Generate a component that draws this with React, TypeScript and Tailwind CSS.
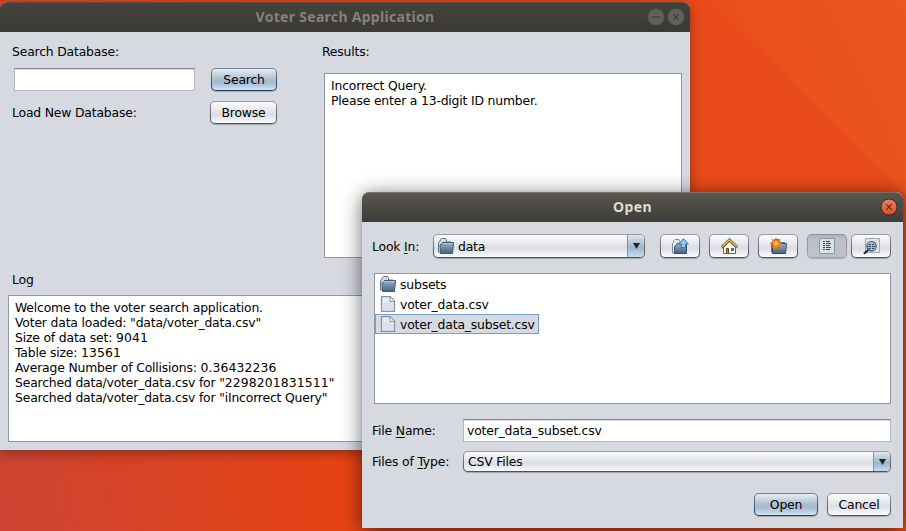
import type { ReactNode } from "react";

function Bevel({ tone = "light", className = "", children }: { tone?: "light" | "blue" | "pressed"; className?: string; children?: ReactNode }) {
  const ring =
    tone === "blue"
      ? "bg-linear-to-b from-[#6f8aa6] to-[#24394f]"
      : tone === "pressed"
        ? "bg-linear-to-b from-[#8d9098] to-[#a3a6ae]"
        : "bg-linear-to-b from-[#999ca1] to-[#4c4f54]";
  const fill =
    tone === "blue"
      ? "bg-[linear-gradient(#e9eef3,#c3d0dc_30%,#a3b8cb_58%,#b5cade_80%,#cfe4f6)]"
      : tone === "pressed"
        ? "bg-[linear-gradient(#b0b3bc,#bdc0c9_25%,#bfc2cb)]"
        : "bg-[linear-gradient(#fbfbfc,#e9ebef_35%,#dadde4_58%,#e8ebf1_78%,#fbfcff)]";
  return (
    <div className={`flex shrink-0 rounded-[5px] p-px shadow-[0_1px_1px_#a5a8af] ${ring} ${className}`}>
      <div className={`flex flex-1 items-center justify-center rounded-[4px] ${fill}`}>{children}</div>
    </div>
  );
}

function ArrowCap() {
  return (
    <div className="flex w-[17px] items-center justify-center self-stretch rounded-r-[4px] border-l border-[#7894ae] bg-[linear-gradient(#dfe7ee,#b5c7d7_35%,#9fb5c9_58%,#c4dcf0)]">
      <svg width="7" height="6" viewBox="0 0 7 6"><path d="M0 0h7L3.5 6z" fill="#22242a" /></svg>
    </div>
  );
}

function Gradients() {
  return (
    <svg width="0" height="0" className="absolute">
      <defs>
        <linearGradient id="folder" x1="0" y1="0" x2="0" y2="1"><stop stopColor="#9bb1c5" /><stop offset="1" stopColor="#45627f" /></linearGradient>
        <linearGradient id="hot" x1="0" y1="0" x2="0" y2="1"><stop stopColor="#f47b5a" /><stop offset="1" stopColor="#e44e22" /></linearGradient>
      </defs>
    </svg>
  );
}

function Folder() {
  return (
    <svg width="16" height="16" viewBox="0 0 16 16" className="shrink-0">
      <path d="M.5 14V5l1.500-2 .5-1.500 1-1h4l1 1V4h4.500l1 1.500V14z" fill="#d3dbe4" stroke="#5f7286" />
      <path d="M2.500 15l-.5-8 1.500-.5L4.500 4.500h11l-1 11h-12z" fill="url(#folder)" stroke="#3f5974" />
      <path d="M4.500 5.500h10" stroke="#b9cad9" />
    </svg>
  );
}

function FileIcon() {
  return (
    <svg width="16" height="16" viewBox="0 0 16 16" className="shrink-0">
      <path d="M1.500.7h8.700l4.300 4.400v10.200h-13z" fill="#e5ecf5" stroke="#8d9299" strokeWidth="1.300" />
      <path d="M3 14V7l7-1 3 1v7z" fill="#d6e2ef" />
      <path d="M10 1v4.500h4.300" fill="#fbfcfd" stroke="#8d9299" />
    </svg>
  );
}

function UpIcon() {
  return (
    <svg width="17" height="17" viewBox="0 0 17 17">
      <path d="M.5 15V5.500l1-1 .5-2 1-1h4l1 2V15z" fill="#e4e9f0" stroke="#7c8b9b" />
      <path d="M2.500 15V8.500l1.500-1 1-2h9.500v10h-12z" fill="url(#folder)" stroke="#3b536b" />
      <path d="M11.500.7L16.300 6h-2.800v3.600h-4V6H6.700z" fill="#8dcaf5" stroke="#2779b5" />
    </svg>
  );
}

function HomeIcon() {
  return (
    <svg width="17" height="17" viewBox="0 0 17 17">
      <path d="M2.500 8L8.500 2.500l6 5.500v7.500h-12z" fill="#f8f7f1" stroke="#656463" />
      <path d="M.8 9.300L8.500 2l7.700 7.300" fill="none" stroke="#65511a" strokeWidth="3" />
      <path d="M1 8.700l7.500-7L16 8.700" fill="none" stroke="#e1be58" strokeWidth="1.500" />
      <path d="M5.500 15.500v-5h2v5" fill="#b18c52" stroke="#554323" />
      <path d="M10.500 10.500h2v2h-2z" fill="#568db8" stroke="#37617f" />
    </svg>
  );
}

function NewFolderIcon() {
  return (
    <svg width="17" height="17" viewBox="0 0 17 17">
      <path d="M1.500 14V4.500h2l1-3h4l2 3h4V14z" fill="#8fa3b7" stroke="#5b7084" />
      <path d="M2.500 6.500h3l1-1h10l-1 10h-13z" fill="url(#folder)" stroke="#344d65" />
      <path d="M6 0l1.100 3L10 1.300 8.800 4.400l3.400 1.200-3.400 1.300 1.400 3.100L7.200 8.600 6 11.800 4.800 8.600 2 10l1.200-3.100L0 5.600l3.200-1.200L2 1.300 4.900 3z" fill="#ff8d20" stroke="#ee5e22" strokeWidth=".7" />
      <circle cx="6" cy="5.600" r="2" fill="#ffc02a" />
    </svg>
  );
}

function ListIcon() {
  return (
    <svg width="16" height="16" viewBox="0 0 16 16">
      <path d="M.5.5h15v15H.5z" fill="#d8e2ed" stroke="#8796a6" />
      <path d="M4 3.500h2M4 5.500h2M4 7.500h2M4 9.500h2M4 11.500h2M7 3.500h4M7 5.500h5M7 7.500h4M7 9.500h5M7 11.500h4" stroke="#40454b" />
    </svg>
  );
}

function DetailIcon() {
  return (
    <svg width="17" height="17" viewBox="0 0 17 17">
      <path d="M2.500.5h14v14h-14z" fill="#d9e3ed" stroke="#9eacba" />
      <path d="M5.400 11.800L1 15.700" stroke="#252c34" strokeWidth="2.200" />
      <circle cx="8.500" cy="8.200" r="4.700" fill="#a6c3dc" stroke="#4b5661" strokeWidth="1.200" />
      <path d="M5.500 6.500H8M9 6.500h2M5 8.500h3M9 8.500h3M5.500 10.500H8M9 10.500h2" stroke="#34465a" />
    </svg>
  );
}

function WinButton({ kind, active = false }: { kind: "min" | "close"; active?: boolean }) {
  return (
    <svg width="18" height="18" viewBox="0 0 18 18" className="shrink-0">
      <circle cx="9" cy="9" r="8" fill={active ? "url(#hot)" : "#62605a"} stroke={active ? "#35302a" : "#5c5a55"} strokeWidth={active ? 1 : 0.5} />
      <path d={kind === "min" ? "M5 9h8" : "M6.200 6.200l5.600 5.600M11.800 6.200l-5.600 5.600"} stroke="#3a3934" strokeWidth="1.200" />
    </svg>
  );
}

function Wallpaper() {
  return (
    <svg width="906" height="531" viewBox="0 0 906 531" className="absolute inset-0">
      <defs>
        <linearGradient id="wall" gradientUnits="userSpaceOnUse" x1="0" y1="520" x2="350" y2="450">
          <stop stopColor="#cc4432" /><stop offset=".5" stopColor="#d94323" /><stop offset="1" stopColor="#e74315" />
        </linearGradient>
        <linearGradient id="facet" gradientUnits="userSpaceOnUse" x1="740" y1="80" x2="906" y2="0">
          <stop stopColor="#ea4e1a" /><stop offset="1" stopColor="#ea5720" />
        </linearGradient>
      </defs>
      <path d="M0 0h906v531H0z" fill="url(#wall)" />
      <path d="M640 0h266v531H640z" fill="#e84a19" />
      <path d="M708 0l198 195V0z" fill="url(#facet)" />
      <path d="M160 531l82-81h120v81z" fill="#ee4710" fillOpacity=".1" />
    </svg>
  );
}

const log: [string, string, string][] = [
  ["Welcome to the voter search application.", "", ""],
  ['Voter data loaded: "data/voter_data.csv"', "", ""],
  ["Size of data set: ", "9041", ""],
  ["Table size: ", "13561", ""],
  ["Average Number of Collisions: ", "0.36432236", ""],
  ['Searched data/voter_data.csv for "', "2298201831511", '"'],
  ['Searched data/voter_data.csv for "iIncorrect Query"', "", ""],
];

export default function App() {
  return (
    <div className="relative h-[531px] w-[906px] overflow-hidden bg-[#e84314] font-['DejaVu_Sans',sans-serif] text-[12.4px] leading-[15px] tracking-[-0.18px] whitespace-nowrap text-black">
      <Wallpaper />
      <Gradients />
      <section className="absolute top-[2px] left-0 flex h-[448px] w-[690px] flex-col rounded-t-[7px] bg-[#d6d9e0] shadow-[0_3px_12px_rgba(0,0,0,0.35)]">
        <header className="flex h-[30px] items-center rounded-t-[7px] border-t border-[#504f4a] bg-linear-to-b from-[#43423d] to-[#3a3935] pr-[5px] pb-px pl-[43px]">
          <h1 className="flex-1 pb-px text-center font-['Noto_Sans',sans-serif] text-[14px] font-bold tracking-[0.3px] text-[#85827b]">Voter Search Application</h1>
          <div className="flex gap-[2px]"><WinButton kind="min" /><WinButton kind="close" /></div>
        </header>
        <div className="flex h-[226px]">
          <div className="flex w-[322px] flex-col pt-[12px] pl-[12px]">
            <span>Search Database:</span>
            <div className="mt-[9px] flex items-center pl-[2px]">
              <div className="h-[23px] w-[181px] border border-[#b4b6ba] border-t-[#85888e] bg-white shadow-[inset_0_1px_#d6d7da]" />
              <Bevel tone="blue" className="ml-[16px] h-[23px] w-[66px]">Search</Bevel>
            </div>
            <div className="mt-[10px] flex items-center">
              <span className="w-[198px]">Load New Database:</span>
              <Bevel className="h-[23px] w-[67px]">Browse</Bevel>
            </div>
          </div>
          <div className="pt-[12px]">
            <span className="block">Results:</span>
            <div className="mt-[14px] ml-[2px] h-[185px] w-[358px] border border-[#9297a1] bg-white px-[6px] pt-[4px]">
              <p>Incorrect Query.</p>
              <p>Please enter a 13-digit ID number.</p>
            </div>
          </div>
        </div>
        <div className="pt-[14px] pl-[8px]">
          <span className="block pl-[4px]">Log</span>
          <div className="mt-[8px] h-[147px] w-[674px] border border-[#9297a1] bg-white px-[6px] pt-[4px]">
            {log.map(([text, digits, tail]) => (
              <p key={text + digits}>{text}<span className="tracking-[0.11px]">{digits}</span>{tail}</p>
            ))}
          </div>
        </div>
      </section>

      <section className="absolute top-[192px] left-[362px] flex h-[336px] w-[541px] flex-col rounded-t-[7px] bg-[#d6d9e0] shadow-[0_3px_20px_rgba(0,0,0,0.6)]">
        <header className="flex h-[30px] items-center rounded-t-[7px] border-t border-[#76736a] bg-linear-to-b from-[#59574d] to-[#3d3c37] pr-[5px] pb-px pl-[23px]">
          <h2 className="flex-1 pb-px text-center font-['Noto_Sans',sans-serif] text-[14px] font-bold tracking-[0.4px] text-[#dfdbd2]">Open</h2>
          <WinButton kind="close" active />
        </header>
        <div className="flex flex-col pt-[12px] pr-[12px] pl-[10px]">
          <div className="flex h-[24px] items-center">
            <span className="w-[61px]">Look <u className="underline-offset-2">I</u>n:</span>
            <Bevel className="h-[24px] w-[212px]">
              <div className="flex flex-1 items-center gap-[4px] pl-[4px]"><Folder /><span>data</span></div>
              <ArrowCap />
            </Bevel>
            <div className="ml-[15px] flex gap-[9px]">
              <Bevel className="h-[24px] w-[40px]"><UpIcon /></Bevel>
              <Bevel className="h-[24px] w-[40px]"><HomeIcon /></Bevel>
              <Bevel className="h-[24px] w-[40px]"><NewFolderIcon /></Bevel>
              <div className="flex gap-[4px]">
                <Bevel tone="pressed" className="h-[24px] w-[40px]"><ListIcon /></Bevel>
                <Bevel className="h-[24px] w-[40px]"><DetailIcon /></Bevel>
              </div>
            </div>
          </div>
          <div className="mt-[15px] ml-[2px] flex h-[131px] w-[517px] flex-col items-start border border-[#9297a1] bg-white">
            <div className="flex h-[20px] items-center gap-[4px] pl-[5px]"><Folder />subsets</div>
            <div className="flex h-[20px] items-center gap-[4px] pl-[5px]"><FileIcon />voter_data.csv</div>
            <div className="flex h-[20px] w-[164px] items-center gap-[4px] border border-[#74a0cc] bg-[#d6d9e0] pl-[4px]"><FileIcon />voter_data_subset.csv</div>
          </div>
          <div className="mt-[15px] flex h-[23px] items-center">
            <span className="w-[91px]">File <u className="underline-offset-2">N</u>ame:</span>
            <div className="flex h-[23px] w-[428px] items-center border border-[#b4b6ba] border-t-[#85888e] bg-white pl-[3px] shadow-[inset_0_1px_#d6d7da]">voter_data_subset.csv</div>
          </div>
          <div className="mt-[9px] flex h-[21px] items-center">
            <span className="w-[91px]">Files of <u className="underline-offset-2">T</u>ype:</span>
            <Bevel className="h-[21px] w-[428px]">
              <span className="flex-1 pl-[4px]">CSV Files</span>
              <ArrowCap />
            </Bevel>
          </div>
          <div className="mt-[21px] flex justify-end gap-[9px]">
            <Bevel tone="blue" className="h-[23px] w-[64px]">Open</Bevel>
            <Bevel className="h-[23px] w-[64px]">Cancel</Bevel>
          </div>
        </div>
      </section>
    </div>
  );
}
